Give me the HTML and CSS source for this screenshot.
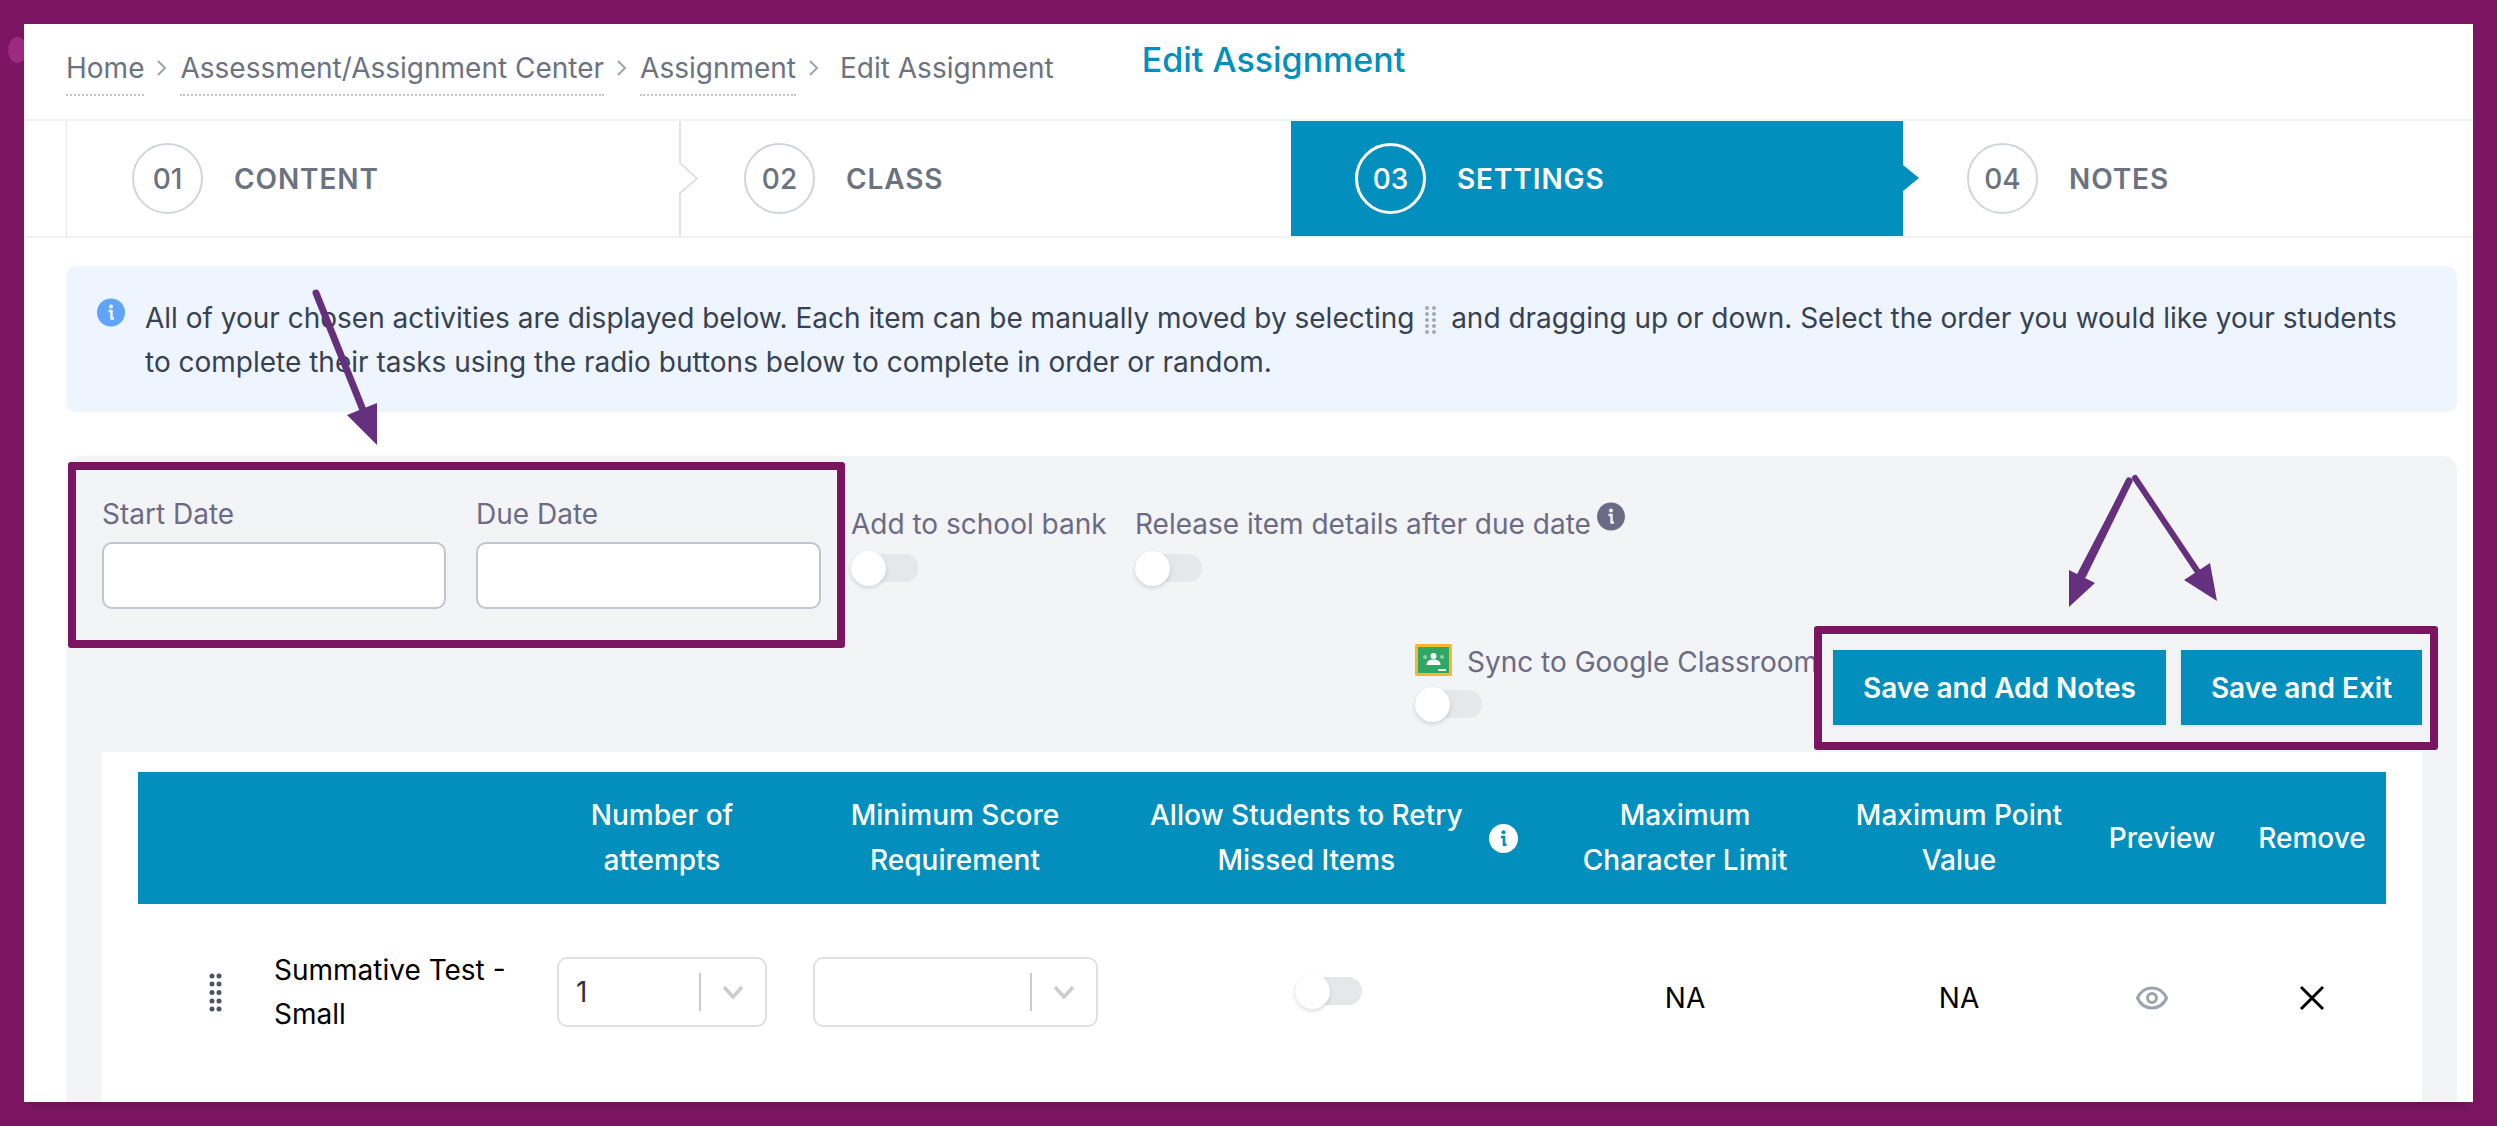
FILE: index.html
```html
<!DOCTYPE html>
<html lang="en">
<head>
<meta charset="utf-8">
<title>Edit Assignment</title>
<link rel="stylesheet" href="styles.css">
</head>
<body>
<span class="edge-dot"></span>
<main class="frame">
  <header class="topbar">
    <nav class="crumbs">
      <a class="crumb">Home</a>
      <svg class="sep" viewBox="0 0 12 20"><path d="M2 3l7 7-7 7"/></svg>
      <a class="crumb">Assessment/Assignment Center</a>
      <svg class="sep" viewBox="0 0 12 20"><path d="M2 3l7 7-7 7"/></svg>
      <a class="crumb">Assignment</a>
      <svg class="sep" viewBox="0 0 12 20"><path d="M2 3l7 7-7 7"/></svg>
      <span class="crumb-current">Edit Assignment</span>
    </nav>
    <h1 class="title">Edit Assignment</h1>
  </header>

  <ol class="steps">
    <li class="step step-first"><span class="num">01</span><span class="step-label">CONTENT</span>
      <svg class="step-chevron" viewBox="0 0 20 115"><path d="M1 0V42L18 57.5 1 72V115"/></svg></li>
    <li class="step"><span class="num">02</span><span class="step-label">CLASS</span></li>
    <li class="step step-active"><span class="num">03</span><span class="step-label">SETTINGS</span>
      <svg class="step-tip" viewBox="0 0 16 26"><path d="M0 0L16 13 0 26Z"/></svg></li>
    <li class="step"><span class="num">04</span><span class="step-label">NOTES</span></li>
  </ol>

  <section class="content">
    <div class="alert">
      <svg class="alert-icon" viewBox="0 0 28 28"><circle cx="14" cy="14" r="14"/><circle class="cut" cx="14" cy="8" r="2"/><path class="cut-line" d="M11.5 12.5H14.5V20H17"/></svg>
      <p class="alert-text">All of your chosen activities are displayed below. Each item can be manually moved by selecting <svg class="drag-inline" viewBox="0 0 13 30"><g><circle cx="3" cy="3" r="2"/><circle cx="10" cy="3" r="2"/><circle cx="3" cy="9" r="2"/><circle cx="10" cy="9" r="2"/><circle cx="3" cy="15" r="2"/><circle cx="10" cy="15" r="2"/><circle cx="3" cy="21" r="2"/><circle cx="10" cy="21" r="2"/><circle cx="3" cy="27" r="2"/><circle cx="10" cy="27" r="2"/></g></svg> and dragging up or down. Select the order you would like your students to complete their tasks using the radio buttons below to complete in order or random.</p>
    </div>

    <div class="panel">
      <div class="row-fields">
        <label class="field field-start"><span class="lbl">Start Date</span><input class="date-input" type="text"></label>
        <label class="field field-due"><span class="lbl">Due Date</span><input class="date-input" type="text"></label>
        <div class="opt opt-bank"><span class="lbl">Add to school bank</span><span class="toggle"><span class="knob"></span></span></div>
        <div class="opt opt-release">
          <span class="lbl lbl-icon">Release item details after due date<svg class="small-info" viewBox="0 0 28 28"><circle cx="14" cy="14" r="14"/><circle class="cut" cx="14" cy="8" r="2"/><path class="cut-line" d="M11.5 12.5H14.5V20H17"/></svg></span>
          <span class="toggle"><span class="knob"></span></span>
        </div>
      </div>
      <div class="row-actions">
        <div class="sync">
          <span class="lbl sync-label"><svg class="gc-icon" viewBox="0 0 37 32"><rect width="37" height="32" rx="1.5" fill="#f5b82e"/><rect x="3" y="3" width="31" height="26" fill="#2fa866"/><circle cx="18.500" cy="12" r="3" fill="#fff"/><path d="M11.500 21c0-4 3-5.500 7-5.500s7 1.500 7 5.500z" fill="#fff"/><circle cx="10" cy="13" r="2" fill="#8fd0ac"/><circle cx="27" cy="13" r="2" fill="#8fd0ac"/><rect x="23" y="25" width="8" height="2" fill="#e8f3ec"/></svg>Sync to Google Classroom</span>
          <span class="toggle"><span class="knob"></span></span>
        </div>
        <button class="btn btn-notes" type="button">Save and Add Notes</button>
        <button class="btn btn-exit" type="button">Save and Exit</button>
      </div>

      <div class="card">
        <div class="table-head">
          <span></span>
          <span class="th">Number of<br>attempts</span>
          <span class="th">Minimum Score<br>Requirement</span>
          <span class="th th-allow"><span>Allow Students to Retry<br>Missed Items</span><svg class="head-info" viewBox="0 0 28 28"><circle cx="14" cy="14" r="14"/><circle class="cut-blue" cx="14" cy="8" r="2"/><path class="cut-blue-line" d="M11.500 12.500H14.500V20H17"/></svg></span>
          <span class="th">Maximum<br>Character Limit</span>
          <span class="th">Maximum Point<br>Value</span>
          <span class="th">Preview</span>
          <span class="th">Remove</span>
        </div>
        <div class="table-row">
          <div class="cell-name">
            <svg class="drag" viewBox="0 0 13 39"><circle cx="3" cy="3" r="2.500"/><circle cx="10" cy="3" r="2.500"/><circle cx="3" cy="11" r="2.500"/><circle cx="10" cy="11" r="2.500"/><circle cx="3" cy="19.500" r="2.500"/><circle cx="10" cy="19.500" r="2.500"/><circle cx="3" cy="28" r="2.500"/><circle cx="10" cy="28" r="2.500"/><circle cx="3" cy="36" r="2.500"/><circle cx="10" cy="36" r="2.500"/></svg>
            <span class="name">Summative Test - Small</span>
          </div>
          <div class="cell-center"><div class="select select-a"><span class="select-value">1</span><span class="select-div"></span><svg class="select-chev" viewBox="0 0 22 14"><path d="M2 2l9 10 9-10"/></svg></div></div>
          <div class="cell-center"><div class="select select-b"><span class="select-value"></span><span class="select-div"></span><svg class="select-chev" viewBox="0 0 22 14"><path d="M2 2l9 10 9-10"/></svg></div></div>
          <div class="cell-center cell-up"><span class="toggle"><span class="knob"></span></span></div>
          <div class="cell-center cell-down">NA</div>
          <div class="cell-center cell-down">NA</div>
          <div class="cell-center cell-down cell-eye"><svg class="eye" viewBox="0 0 32 24"><path d="M1.500 12C4.500 5.500 9.500 2 16 2s11.500 3.500 14.500 10C27.500 18.500 22.500 22 16 22S4.500 18.500 1.500 12z"/><circle cx="16" cy="12" r="4.500"/></svg></div>
          <div class="cell-center cell-down"><svg class="close" viewBox="0 0 26 26"><path d="M2 2l22 22M24 2L2 24"/></svg></div>
        </div>
      </div>
    </div>
  </section>
</main>

<div class="mark mark-dates"></div>
<div class="mark mark-buttons"></div>
<svg class="arrows" viewBox="0 0 2497 1126">
  <path class="shaft" d="M316 293L367 420"/>
  <path class="head" d="M377 445L377 403 347 415Z"/>
  <path class="shaft" d="M2129 481L2083 575"/>
  <path class="shaft thin" d="M2129 481L2080 575"/>
  <path class="head" d="M2069 607L2069 570 2095 583Z"/>
  <path class="shaft thin" d="M2135 478L2198 572"/>
  <path class="head" d="M2217 601L2210 563 2184 580Z"/>
</svg>
</body>
</html>
```
FILE: styles.css
```css
* { box-sizing: border-box; }
html, body { margin: 0; padding: 0; }
body {
  position: relative;
  width: 2497px;
  height: 1126px;
  overflow: hidden;
  background: #7b1561;
  font-family: Inter, "Noto Sans", sans-serif;
  font-size: 28px;
  color: #374151;
}
.edge-dot {
  position: absolute;
  left: 8px;
  top: 37px;
  width: 19px;
  height: 26px;
  border-radius: 50%;
  background: #9b2a80;
}
.frame {
  position: relative;
  margin: 24px 24px 0;
  width: 2449px;
  height: 1078px;
  background: #fff;
  overflow: hidden;
}
body::after {
  content: "";
  position: absolute;
  left: 30px;
  right: 30px;
  top: 1102px;
  height: 10px;
  background: linear-gradient(rgba(0,0,0,.12), rgba(0,0,0,0));
}

/* top bar */
.topbar {
  display: flex;
  height: 97px;
  padding: 0 0 0 42px;
  border-bottom: 2px solid #f1f2f4;
  align-items: flex-start;
}
.crumbs {
  display: flex;
  align-items: center;
  padding-top: 16px;
  color: #6b7280;
  line-height: 34px;
}
.crumb {
  border-bottom: 2px dotted #c2c6cc;
  padding-bottom: 9px;
  margin-top: 11px;
  white-space: nowrap;
}
.sep {
  width: 12px;
  height: 20px;
  margin: 0 12px;
  fill: none;
  stroke: #9ca3af;
  stroke-width: 2;
}
.crumb-current { white-space: nowrap; margin-left: 8px; }
.title {
  margin: 13px 0 0 88px;
  font-size: 34px;
  line-height: 46px;
  font-weight: 500;
  color: #028fbd;
  white-space: nowrap;
}

/* steps */
.steps {
  display: grid;
  grid-template-columns: 42px 614px 611px 612px 1fr;
  height: 117px;
  margin: 0;
  padding: 0;
  list-style: none;
  border-bottom: 2px solid #f1f2f4;
}
.step {
  position: relative;
  display: flex;
  align-items: center;
  gap: 31px;
  padding: 0 0 0 64px;
  height: 115px;
}
.step-first { grid-column: 2; border-left: 1px solid #e5e7eb; padding-left: 65px; }
.num {
  display: flex;
  align-items: center;
  justify-content: center;
  width: 71px;
  height: 71px;
  border: 2px solid #d1d5db;
  border-radius: 50%;
  font-size: 28px;
  font-weight: 500;
  color: #6b7280;
}
.step-label {
  font-weight: 600;
  color: #6b7280;
  letter-spacing: .9px;
}
.step-chevron {
  position: absolute;
  right: -19px;
  top: 0;
  width: 20px;
  height: 115px;
  fill: #fff;
  stroke: #d5d8dd;
  stroke-width: 1.500;
}
.step-active { background: #028fbd; }
.step-active .num { border: 3px solid #fff; color: #fff; }
.step-active .step-label { color: #fff; }
.step-tip {
  position: absolute;
  right: -16px;
  top: 44px;
  width: 16px;
  height: 26px;
  fill: #028fbd;
}

/* content */
.content { padding: 28px 16px 0 42px; }
.alert {
  display: flex;
  gap: 20px;
  align-items: flex-start;
  height: 146px;
  padding: 30px 40px 0 31px;
  background: #eef5fe;
  border-radius: 10px;
}
.alert-icon { flex: none; width: 28px; height: 29px; margin-top: 2px; fill: #60a5fa; }
.cut { fill: #eef5fe; }
.cut-line { fill: none; stroke: #eef5fe; stroke-width: 2.500; }
.alert-text { margin: 0; line-height: 44px; color: #374151; }
.drag-inline { width: 13px; height: 30px; vertical-align: -7px; margin: 0 6px 0 2px; fill: #a3a9b4; }

/* panel */
.panel {
  margin-top: 44px;
  padding: 36px 35px 0 36px;
  background: #f3f4f6;
  border-radius: 14px 14px 0 0;
  height: 700px;
}
.lbl { color: #6b6b85; line-height: 45px; white-space: nowrap; }
.row-fields { display: flex; gap: 30px; align-items: flex-start; height: 117px; }
.field { display: flex; flex-direction: column; }
.field-start { width: 344px; }
.field-due { width: 345px; }
.date-input {
  height: 67px;
  width: 100%;
  margin-top: 5px;
  background: #fff;
  border: 2px solid #c4c4d0;
  border-radius: 10px;
}
.opt { display: flex; flex-direction: column; align-items: flex-start; gap: 7px; padding-top: 10px; }
.opt-bank { width: 254px; }
.lbl-icon { display: flex; align-items: center; }
.small-info { width: 28px; height: 29px; margin: -16px 0 0 6px; fill: #6b6b85; }
.small-info .cut { fill: #f3f4f6; }
.small-info .cut-line { stroke: #f3f4f6; }

.toggle {
  display: flex;
  align-items: center;
  width: 67px;
  height: 28px;
  border-radius: 14px;
  background: #e5e7eb;
}
.knob {
  display: block;
  width: 35px;
  height: 35px;
  border-radius: 50%;
  background: #fff;
  box-shadow: 0 2px 4px rgba(0,0,0,.14);
}

.row-actions {
  display: flex;
  justify-content: flex-end;
  align-items: flex-start;
  height: 112px;
  margin-top: 31px;
  gap: 15px;
}
.sync { display: flex; flex-direction: column; align-items: flex-start; gap: 5px; width: 403px; }
.sync-label { display: flex; align-items: center; gap: 15px; }
.gc-icon { width: 37px; height: 32px; margin-top: -6px; }
.btn {
  margin-top: 10px;
  height: 75px;
  padding: 0;
  border: 0;
  background: #028fbd;
  color: #fff;
  font: 600 28px Inter, "Noto Sans", sans-serif;
  box-shadow: 0 1px 3px rgba(0,0,0,.1);
}
.btn-notes { width: 333px; }
.btn-exit { width: 241px; }

/* table */
.card {
  background: #fff;
  padding: 20px 36px 0;
  height: 400px;
}
.table-head, .table-row {
  display: grid;
  grid-template-columns: 402px 244px 342px 404px 310px 238px 168px 132px;
}
.table-head {
  height: 132px;
  background: #028fbd;
  align-items: center;
  color: #fff;
  font-weight: 500;
  line-height: 45px;
  text-align: center;
}
.th-allow { display: flex; align-items: center; gap: 26px; padding-left: 24px; }
.head-info { flex: none; width: 29px; height: 29px; fill: #fff; }
.cut-blue { fill: #028fbd; }
.cut-blue-line { fill: none; stroke: #028fbd; stroke-width: 2.500; }
.table-row { height: 180px; align-items: flex-start; padding-top: 53px; color: #000; }
.cell-name { display: flex; align-items: center; gap: 52px; padding: 0 0 0 71px; height: 70px; }
.drag { flex: none; width: 13px; height: 39px; fill: #4b5563; }
.name { width: 250px; line-height: 44px; }
.cell-center { display: flex; justify-content: center; align-items: center; height: 70px; }
.cell-up { margin-top: -1px; }
.cell-down { margin-top: 6px; }
.select {
  display: flex;
  align-items: center;
  height: 70px;
  background: #fff;
  border: 2px solid #e0e0e0;
  border-radius: 10px;
}
.select-a { width: 210px; }
.select-b { width: 285px; }
.select-value { flex: 1; padding-left: 17px; color: #333; }
.select-div { width: 2px; height: 38px; background: #ccc; }
.select-chev { width: 22px; height: 14px; margin: 0 21px; fill: none; stroke: #ccc; stroke-width: 3.500; }
.cell-eye { padding-right: 20px; }
.eye { width: 32px; height: 24px; fill: none; stroke: #9ca3af; stroke-width: 3; }
.close { width: 26px; height: 26px; fill: none; stroke: #000; stroke-width: 3; }

/* annotations */
.mark { position: absolute; border: 8px solid #7b1561; border-radius: 3px; }
.mark-dates { left: 68px; top: 462px; width: 777px; height: 186px; }
.mark-buttons { left: 1814px; top: 626px; width: 624px; height: 124px; }
.arrows { position: absolute; left: 0; top: 0; width: 2497px; height: 1126px; pointer-events: none; }
.shaft { fill: none; stroke: #65317e; stroke-width: 7; stroke-linecap: round; }
.shaft.thin { stroke-width: 6; }
.head { fill: #65317e; }
```
